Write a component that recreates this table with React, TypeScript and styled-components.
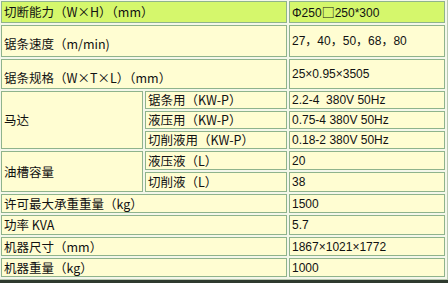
import styled, { createGlobalStyle } from "styled-components";

const GlobalStyle = createGlobalStyle`
  html, body {
    margin: 0;
    padding: 0;
    background: #f4f7ea;
  }
`;

type Row = {
  label: string;
  value?: React.ReactNode;
  height: number;
  head?: boolean;
  drop?: number;
  group?: { label: string; span: number };
  sub?: string;
};

const rows: Row[] = [
  {
    label: "切断能力（W×H）（mm）",
    value: (
      <>
        Φ250<Wide>□</Wide>250*300
      </>
    ),
    height: 22,
    head: true,
  },
  { label: "锯条速度（m/min)", value: "27，40，50，68，80", height: 32, drop: 6 },
  { label: "锯条规格（W×T×L）（mm）", value: "25×0.95×3505", height: 30, drop: 8 },
  { label: "", group: { label: "马达", span: 3 }, sub: "锯条用（KW-P）", value: "2.2-4  380V 50Hz", height: 18 },
  { label: "", sub: "液压用（KW-P）", value: "0.75-4 380V 50Hz", height: 18 },
  { label: "", sub: "切削液用（KW-P）", value: "0.18-2 380V 50Hz", height: 18 },
  { label: "", group: { label: "油槽容量", span: 2 }, sub: "液压液（L）", value: "20", height: 19 },
  { label: "", sub: "切削液（L）", value: "38", height: 20 },
  { label: "许可最大承重重量（kg）", value: "1500", height: 19 },
  { label: "功率 KVA", value: "5.7", height: 20 },
  { label: "机器尺寸（mm）", value: "1867×1021×1772", height: 19 },
  { label: "机器重量（kg）", value: "1000", height: 19 },
];

export default function App() {
  return (
    <Frame>
      <GlobalStyle />
      <SpecTable>
        <colgroup>
          <col style={{ width: 142 }} />
          <col style={{ width: 142 }} />
          <col />
        </colgroup>
        <tbody>
          {rows.map((r, i) => (
            <tr key={i} style={{ height: r.height }}>
              {r.group && (
                <LabelCell rowSpan={r.group.span}>{r.group.label}</LabelCell>
              )}
              {r.sub ? (
                <LabelCell>{r.sub}</LabelCell>
              ) : (
                <LabelCell colSpan={2} $head={r.head} $drop={r.drop}>
                  {r.label}
                </LabelCell>
              )}
              <ValueCell $head={r.head}>{r.value}</ValueCell>
            </tr>
          ))}
        </tbody>
      </SpecTable>
    </Frame>
  );
}

function Wide({ children }: { children: React.ReactNode }) {
  return <WideGlyph>{children}</WideGlyph>;
}

const WideGlyph = styled.span`
  font-family: "Noto Sans CJK SC", sans-serif;
  font-size: 13px;
  line-height: 14px;
`;

const Frame = styled.div`
  width: 448px;
  height: 283px;
  overflow: hidden;
  box-sizing: border-box;
  border-bottom: 3px solid #2e3a2e;
  background: #f4f7ea;
`;

const SpecTable = styled.table`
  width: 450px;
  table-layout: fixed;
  border-collapse: separate;
  border-spacing: 2px;
  margin: -2px 0 0 -2px;
  border: 1px solid #b8c9b0;
`;

const Cell = styled.td<{ $head?: boolean; $drop?: number }>`
  border: 1px solid #8fb38c;
  background: ${(p) => (p.$head ? "#d5f76c" : "#fffdd2")};
  color: #111;
  padding: ${(p) => p.$drop ?? 0}px 2px 0 2px;
  vertical-align: middle;
  white-space: nowrap;
  overflow: hidden;
  box-sizing: border-box;
  line-height: 14px;
`;

const LabelCell = styled(Cell)`
  font-family: "Noto Sans CJK SC", "Liberation Serif", serif;
  font-size: 12.5px;
`;

const ValueCell = styled(Cell)`
  font-family: "Liberation Sans", "Noto Sans CJK SC", sans-serif;
  font-size: 12px;
  white-space: pre;
`;
